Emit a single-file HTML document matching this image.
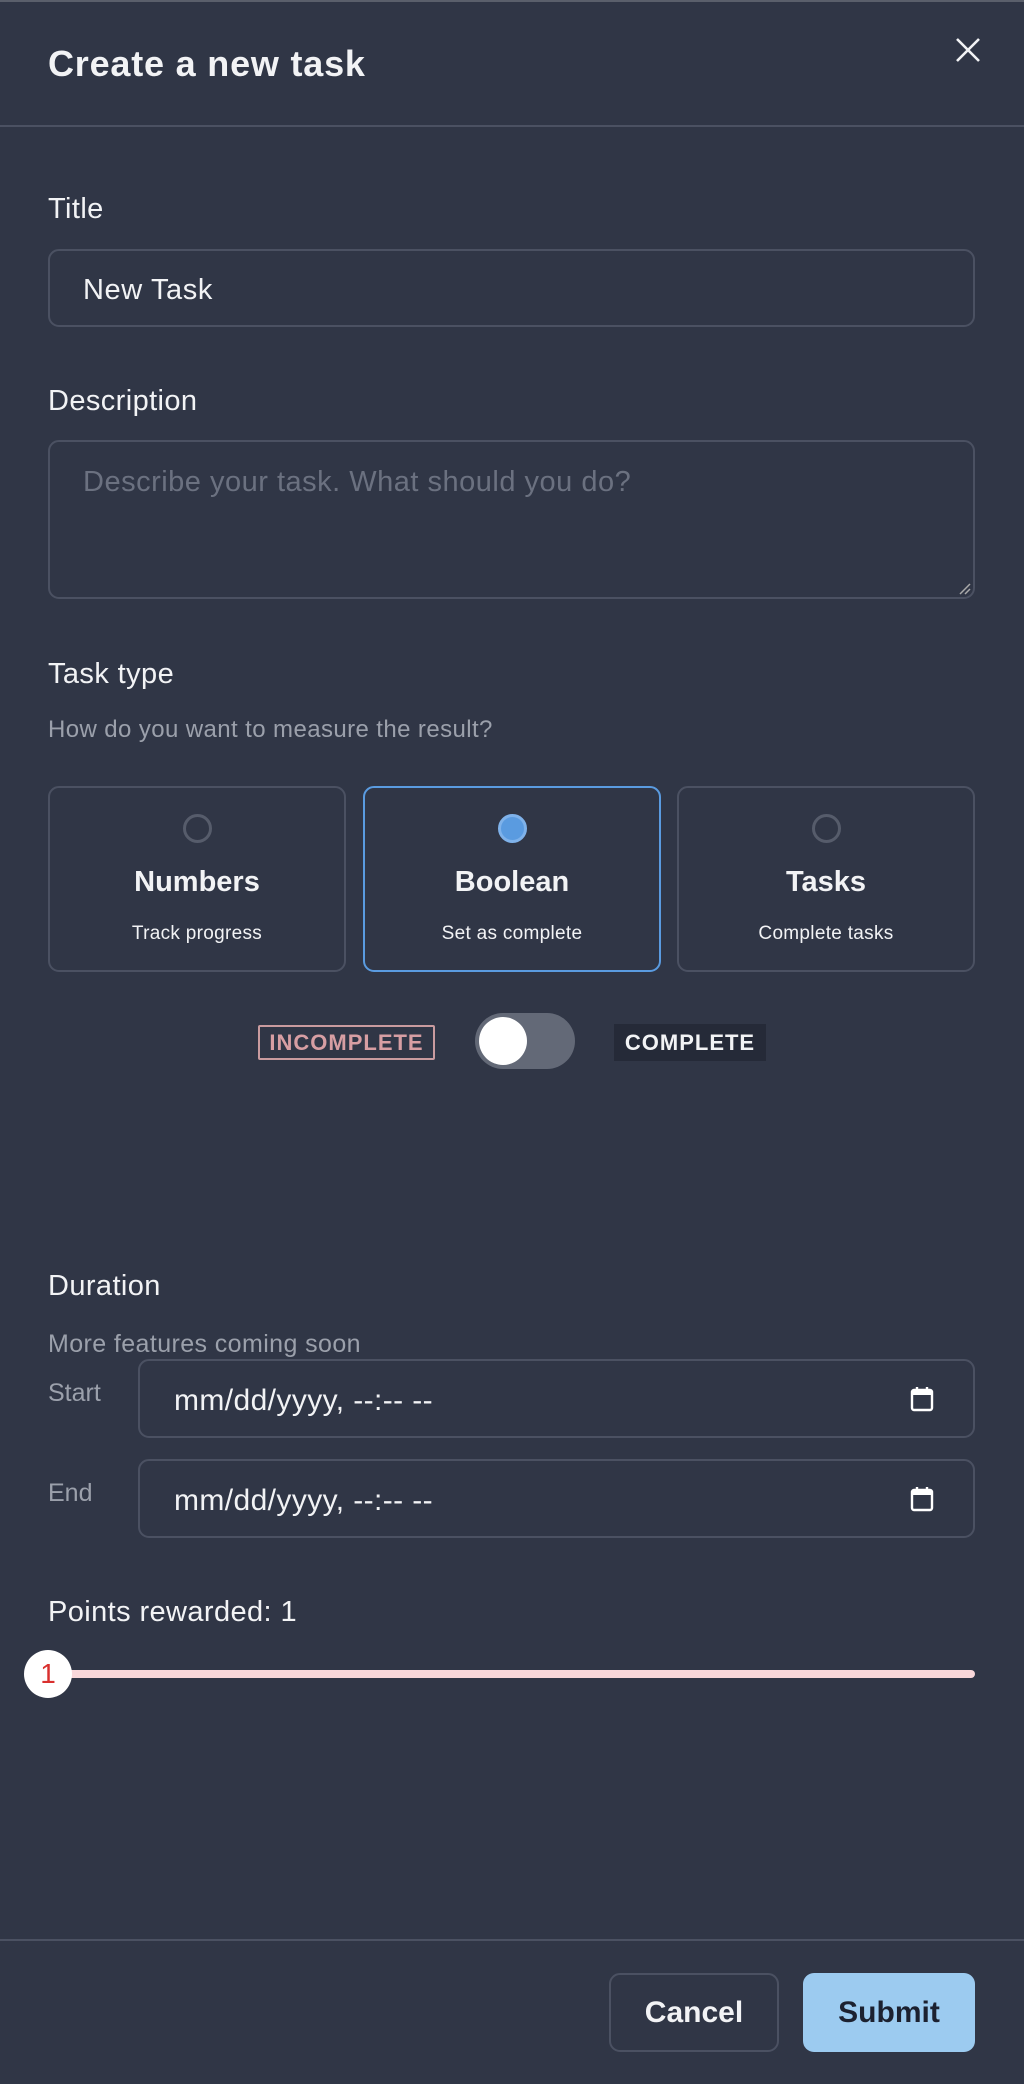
<!DOCTYPE html>
<html><head><meta charset="utf-8"><style>
*{box-sizing:border-box;margin:0;padding:0}
html,body{width:1024px;height:2084px;background:#303646;font-family:"Liberation Sans",sans-serif;color:#f2f3f5;overflow:hidden}
.abs{position:absolute}
.lbl{position:absolute;left:48px;font-size:29px;font-weight:500;line-height:1;letter-spacing:0.4px}
.box{position:absolute;border:2px solid #4b5162;border-radius:11px}
.card{position:absolute;top:786px;height:186px;width:298px;border:2px solid #4b5162;border-radius:11px;text-align:center}
.card .r{position:absolute;left:50%;top:26px;width:29px;height:29px;margin-left:-14.5px;border:3px solid #565c6b;border-radius:50%}
.card .t{position:absolute;left:0;right:0;top:78px;font-size:29px;font-weight:bold}
.card .s{position:absolute;left:0;right:0;top:135px;font-size:19px;letter-spacing:0.3px}
.cal{position:absolute;right:38px;width:26px;height:28px}
</style></head><body>
<div class="abs" style="left:0;top:0;width:1024px;height:2px;background:#5a5f6b"></div>
<div class="abs" style="left:48px;top:46px;font-size:36px;font-weight:bold;line-height:1;letter-spacing:0.8px">Create a new task</div>
<svg class="abs" style="left:954px;top:36px" width="28" height="28" viewBox="0 0 28 28"><path d="M3 3L25 25M25 3L3 25" stroke="#f2f3f5" stroke-width="2.6" fill="none"/></svg>
<div class="abs" style="left:0;top:125px;width:1024px;height:2px;background:#4b5162"></div>

<div class="lbl" style="top:195px">Title</div>
<div class="box" style="left:48px;top:249px;width:927px;height:78px"><div class="abs" style="left:33px;top:23px;font-size:29px;letter-spacing:0.6px">New Task</div></div>

<div class="lbl" style="top:387px">Description</div>
<div class="box" style="left:48px;top:440px;width:927px;height:159px"><div class="abs" style="left:33px;top:24px;font-size:29px;color:#6b7180;letter-spacing:0.5px">Describe your task. What should you do?</div>
<svg class="abs" style="right:2px;bottom:2px" width="12" height="12"><path d="M1 11L11 1M6 11L11 6" stroke="#aaa" stroke-width="1.5"/></svg></div>

<div class="lbl" style="top:660px">Task type</div>
<div class="abs" style="left:48px;top:716px;font-size:24px;color:#9ba0ab;letter-spacing:0.4px">How do you want to measure the result?</div>

<div class="card" style="left:48px"><div class="r"></div><div class="t">Numbers</div><div class="s">Track progress</div></div>
<div class="card" style="left:363px;border-color:#5a9be0"><div class="r" style="border-color:#7fb2ea;background:#5a9be0"></div><div class="t">Boolean</div><div class="s">Set as complete</div></div>
<div class="card" style="left:677px"><div class="r"></div><div class="t">Tasks</div><div class="s">Complete tasks</div></div>

<div class="abs" style="left:258px;top:1025px;width:177px;height:35px;border:2px solid #c99b9f;border-radius:2px;color:#d79ea3;font-size:22px;font-weight:bold;text-align:center;line-height:31px;letter-spacing:1px">INCOMPLETE</div>
<div class="abs" style="left:475px;top:1013px;width:100px;height:56px;border-radius:28px;background:#636977"></div>
<div class="abs" style="left:479px;top:1017px;width:48px;height:48px;border-radius:50%;background:#fff"></div>
<div class="abs" style="left:614px;top:1024px;width:152px;height:37px;background:#252a38;color:#f2f3f5;font-size:22px;font-weight:bold;text-align:center;line-height:37px;letter-spacing:1px">COMPLETE</div>

<div class="lbl" style="top:1272px">Duration</div>
<div class="abs" style="left:48px;top:1330px;font-size:25px;color:#9ba0ab;letter-spacing:0.4px">More features coming soon</div>
<div class="abs" style="left:48px;top:1379px;font-size:25px;color:#9ba0ab">Start</div>
<div class="box" style="left:138px;top:1359px;width:837px;height:79px"><div class="abs" style="left:34px;top:23px;font-size:30px;letter-spacing:0.4px">mm/dd/yyyy, --:-- --</div>
<svg class="cal" style="top:24px" viewBox="0 0 26 28"><rect x="3" y="5" width="20" height="20" rx="2" fill="none" stroke="#fff" stroke-width="2.4"/><rect x="3" y="5" width="20" height="5" fill="#fff"/><path d="M8 2v5M18 2v5" stroke="#fff" stroke-width="2.4"/></svg></div>
<div class="abs" style="left:48px;top:1479px;font-size:25px;color:#9ba0ab">End</div>
<div class="box" style="left:138px;top:1459px;width:837px;height:79px"><div class="abs" style="left:34px;top:23px;font-size:30px;letter-spacing:0.4px">mm/dd/yyyy, --:-- --</div>
<svg class="cal" style="top:24px" viewBox="0 0 26 28"><rect x="3" y="5" width="20" height="20" rx="2" fill="none" stroke="#fff" stroke-width="2.4"/><rect x="3" y="5" width="20" height="5" fill="#fff"/><path d="M8 2v5M18 2v5" stroke="#fff" stroke-width="2.4"/></svg></div>

<div class="lbl" style="top:1598px">Points rewarded: 1</div>
<div class="abs" style="left:48px;top:1670px;width:927px;height:8px;border-radius:4px;background:#f8d7da"></div>
<div class="abs" style="left:24px;top:1650px;width:48px;height:48px;border-radius:50%;background:#fff;color:#d9302e;font-size:28px;text-align:center;line-height:48px">1</div>

<div class="abs" style="left:0;top:1939px;width:1024px;height:2px;background:#4b5162"></div>
<div class="abs" style="left:609px;top:1973px;width:170px;height:79px;border:2px solid #4b5162;border-radius:11px;text-align:center;line-height:75px;font-size:30px;font-weight:bold">Cancel</div>
<div class="abs" style="left:803px;top:1973px;width:172px;height:79px;background:#9ccbf0;border-radius:11px;text-align:center;line-height:79px;font-size:30px;font-weight:bold;color:#1c2130">Submit</div>
</body></html>
